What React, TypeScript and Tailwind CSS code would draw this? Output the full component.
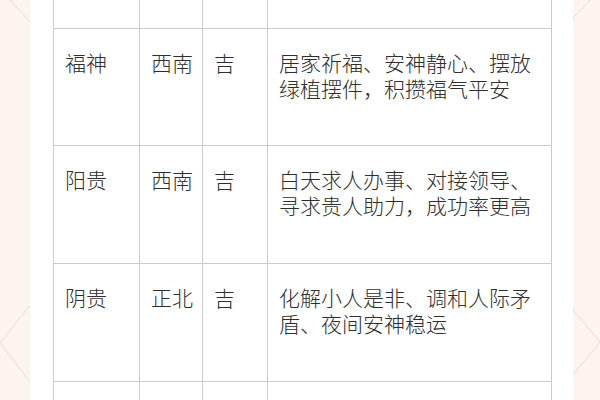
const rows = [
  { name: "福神", dir: "西南", luck: "吉", desc: "居家祈福、安神静心、摆放绿植摆件，积攒福气平安" },
  { name: "阳贵", dir: "西南", luck: "吉", desc: "白天求人办事、对接领导、寻求贵人助力，成功率更高" },
  { name: "阴贵", dir: "正北", luck: "吉", desc: "化解小人是非、调和人际矛盾、夜间安神稳运" },
];

const Cell = ({ children, w }: { children?: React.ReactNode; w: string }) => (
  <div className={`${w} shrink-0 border-r border-[#cbcbcb] pl-[11px] pr-[10px] pt-[20px] leading-[26px]`}>{children}</div>
);

const EmptyRow = ({ h }: { h: string }) => (
  <div className={`flex ${h} border-b border-[#cbcbcb]`}>
    <div className="w-[86px] shrink-0 border-r border-[#cbcbcb]" />
    <div className="w-[63px] shrink-0 border-r border-[#cbcbcb]" />
    <div className="w-[65px] shrink-0 border-r border-[#cbcbcb]" />
    <div className="w-[284px] shrink-0 border-r border-[#cbcbcb]" />
  </div>
);

export default function App() {
  return (
    <div
      className="flex h-[400px] w-[600px] overflow-hidden bg-white text-[21px] font-light text-[#2e2e2e]"
      style={{ fontFamily: '"Noto Sans CJK SC", "Noto Sans", sans-serif' }}
    >
      {/* left strip */}
      <div className="w-[30px] shrink-0 bg-[#fdf3ef]">
        <svg width="30" height="400" viewBox="0 0 30 400">
          <g stroke="#ecdcd6" strokeWidth="1" fill="none">
            <line x1="10" y1="0" x2="30" y2="22" />
            <polyline points="30,305 0,343 30,382" />
          </g>
        </svg>
      </div>

      <div className="flex-1 pl-[23px]">
        <div className="w-[499px] border-l border-[#cbcbcb]">
          <EmptyRow h="h-[29px]" />
          {rows.map((r, i) => (
            <div key={r.name} className={`flex ${i === 0 ? "h-[117px]" : "h-[118px]"} border-b border-[#cbcbcb]`}>
              <Cell w="w-[86px] whitespace-nowrap">{r.name}</Cell>
              <Cell w="w-[63px] whitespace-nowrap">{r.dir}</Cell>
              <Cell w="w-[65px] whitespace-nowrap">{r.luck}</Cell>
              <Cell w="w-[284px]">{r.desc}</Cell>
            </div>
          ))}
          <EmptyRow h="h-[40px]" />
        </div>
      </div>

      {/* right strip */}
      <div className="w-[27px] shrink-0 bg-[#fdf3ef]">
        <svg width="27" height="400" viewBox="0 0 27 400">
          <g stroke="#ecdcd6" strokeWidth="1" fill="none">
            <line x1="0" y1="18" x2="17" y2="0" />
            <polyline points="0,310 27,342 0,375" />
          </g>
        </svg>
      </div>
    </div>
  );
}
